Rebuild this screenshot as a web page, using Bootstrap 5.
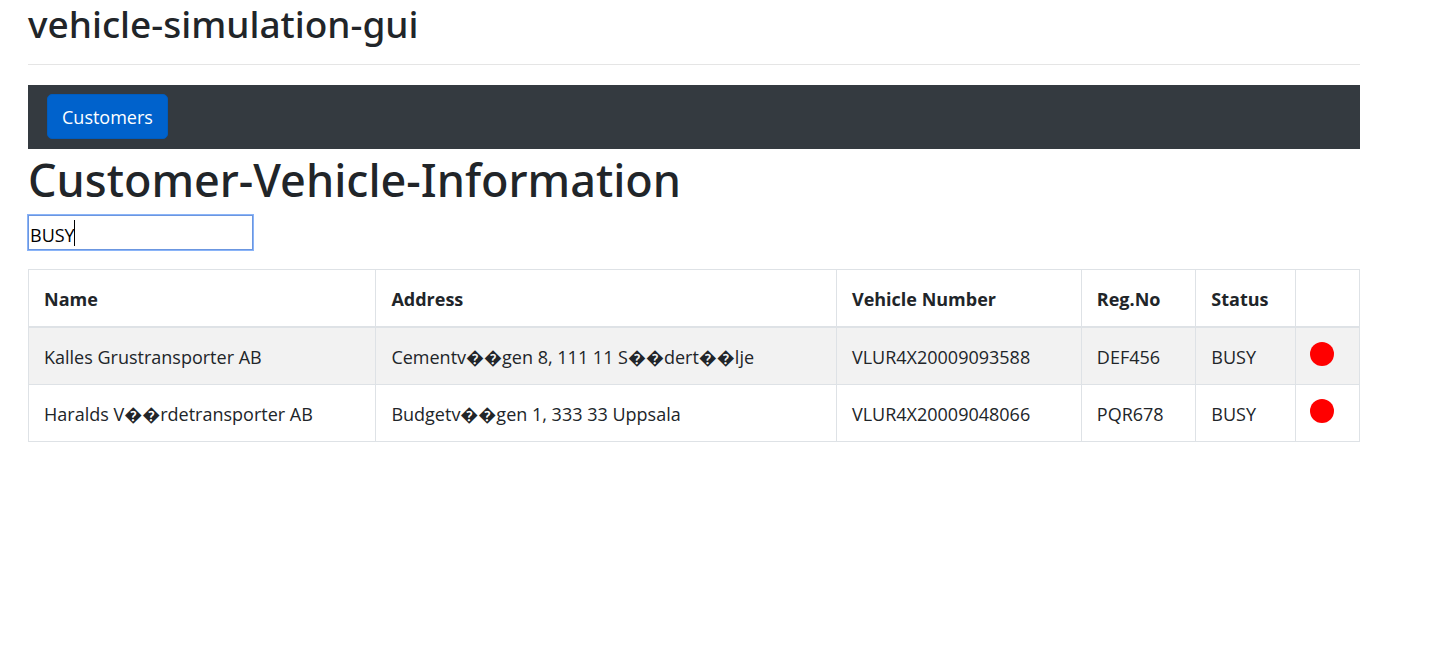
<!DOCTYPE html>
<html lang="en">
<head>
<meta charset="utf-8">
<meta name="viewport" content="width=device-width, initial-scale=1">
<title>vehicle-simulation-gui</title>
<link href="https://cdn.jsdelivr.net/npm/bootstrap@5.3.0/dist/css/bootstrap.min.css" rel="stylesheet">
<style>
body { font-family: "Open Sans", "Noto Sans", sans-serif; font-size: 18px; color: #212529; }
.page { padding: 0 73px 0 28px; }
.app-title, .page-title { font-family: "Noto Sans", sans-serif; font-weight: 500; margin: 0; }
.app-title { font-size: 37px; line-height: 48px; }
.page-title { font-size: 45px; line-height: 62px; }
.rule { margin: 16px 0 20px; border-top: 1px solid #e5e5e5; opacity: 1; }
.topbar { background: #343a40; padding: 9px 19px 10px; }
.btn-customers, .btn-customers:hover { background: #0062cc; border: 1px solid #005cbf; color: #fff; }
.btn-customers { font-size: 18px; line-height: 27px; padding: 9px 14px 7px; border-radius: 5px; }
.search-box { width: 225px; margin: 4px 0 19px; }
.search { height: 35px; padding: 4px 1px 0; border: 1px solid #6b96e0; outline: 0; box-shadow: 0 0 0 1px #8ab4f8; border-radius: 0; font-size: 18px; color: #000; caret-color: transparent; }
.caret { left: 46px; top: 5px; width: 1px; height: 26px; background: #000; }
.vehicles { margin: 0; --bs-table-color: #212529; --bs-table-striped-color: #212529; --bs-table-striped-bg: #f2f2f2; border-color: #dee2e6; }
.vehicles th, .vehicles td { padding: 16px 15px 13px; line-height: 27px; }
.vehicles thead th { border-bottom-width: 2px; }
.vehicles .status-cell { padding: 14px 14px 13px; }
.dot { width: 24px; height: 24px; display: block; }
.col-name { width: 26.1%; }
.col-address { width: 34.6%; }
.col-vehicle { width: 18.4%; }
.col-reg { width: 8.6%; }
.col-status { width: 7.5%; }
.col-light { width: 4.8%; }
</style>
</head>
<body>
<div class="page">
<h1 class="app-title">vehicle-simulation-gui</h1>
<hr class="rule">
<nav class="topbar d-flex align-items-center"><button type="button" class="btn btn-customers">Customers</button></nav>
<h2 class="page-title">Customer-Vehicle-Information</h2>
<div class="search-box position-relative">
<input class="search d-block w-100" type="text" value="BUSY" aria-label="Search">
<span class="caret position-absolute" aria-hidden="true"></span>
</div>
<table class="table table-bordered table-striped vehicles">
<colgroup><col class="col-name"><col class="col-address"><col class="col-vehicle"><col class="col-reg"><col class="col-status"><col class="col-light"></colgroup>
<thead><tr><th>Name</th><th>Address</th><th>Vehicle Number</th><th>Reg.No</th><th>Status</th><th></th></tr></thead>
<tbody>
<tr><td>Kalles Grustransporter AB</td><td>Cementv��gen 8, 111 11 S��dert��lje</td><td>VLUR4X20009093588</td><td>DEF456</td><td>BUSY</td><td class="status-cell"><svg class="dot" viewBox="0 0 24 24"><circle cx="12" cy="12" r="12" fill="red"/></svg></td></tr>
<tr><td>Haralds V��rdetransporter AB</td><td>Budgetv��gen 1, 333 33 Uppsala</td><td>VLUR4X20009048066</td><td>PQR678</td><td>BUSY</td><td class="status-cell"><svg class="dot" viewBox="0 0 24 24"><circle cx="12" cy="12" r="12" fill="red"/></svg></td></tr>
</tbody></table>
</div>
<script src="https://cdn.jsdelivr.net/npm/bootstrap@5.3.0/dist/js/bootstrap.bundle.min.js"></script>
</body>
</html>
